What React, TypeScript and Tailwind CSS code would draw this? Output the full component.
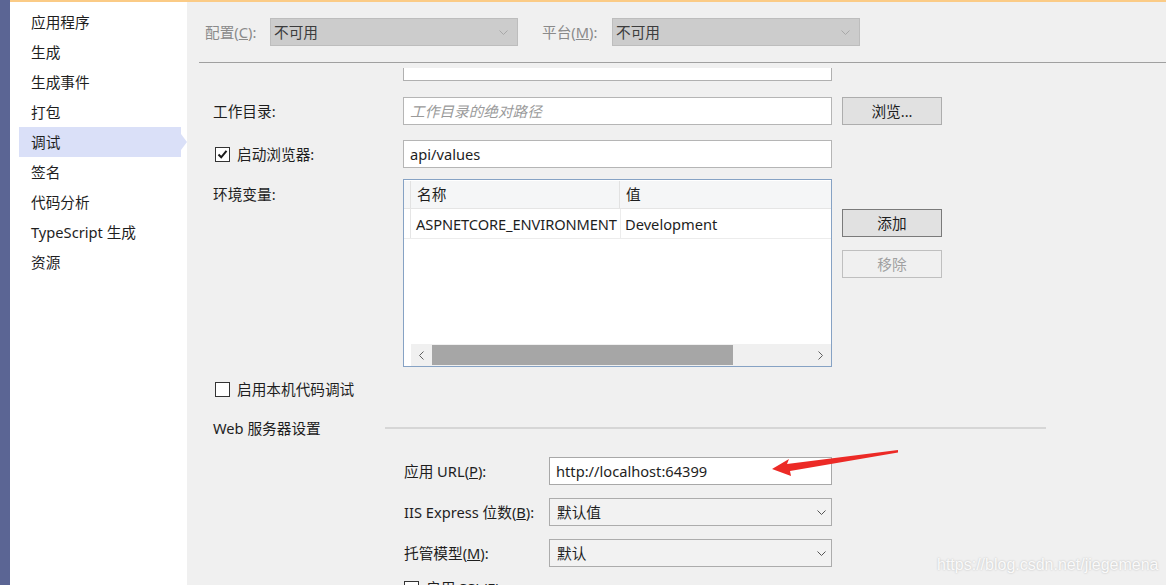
import React from "react";

function Chevron({ color = "#606060" }: { color?: string }) {
  return (
    <svg width="9" height="5" viewBox="0 0 9 5">
      <polyline points="0.5,0.5 4.5,4.5 8.5,0.5" fill="none" stroke={color} strokeWidth="1" />
    </svg>
  );
}

function CheckBox({ checked }: { checked?: boolean }) {
  return (
    <div className="w-[15px] h-[15px] border border-[#333333] bg-white flex items-center justify-center shrink-0">
      {checked && (
        <svg width="11" height="11" viewBox="0 0 11 11">
          <polyline points="1.5,5.5 4.2,8.3 9.5,1.8" fill="none" stroke="#1a1a1a" strokeWidth="2" />
        </svg>
      )}
    </div>
  );
}

const sideItems = ["应用程序", "生成", "生成事件", "打包", "调试", "签名", "代码分析", "TypeScript 生成", "资源"];

function Sidebar() {
  return (
    <div className="w-[177px] shrink-0 bg-white pt-[5px] flex flex-col">
      {sideItems.map((t, i) => (
        <div
          key={t}
          className={
            "relative h-[30px] ml-[9px] w-[162px] pl-[12px] flex items-center " +
            (i === 4 ? "bg-[#dae0f8]" : "")
          }
        >
          {t}
          {i === 4 && (
            <div className="absolute right-[-6px] top-[7px] w-0 h-0 border-l-[6px] border-l-[#dae0f8] border-y-[8px] border-y-transparent" />
          )}
        </div>
      ))}
    </div>
  );
}

function TopSelect() {
  return (
    <div className="w-[248px] h-[28px] bg-[#cccccc] border border-[#bdbdbd] flex items-center pl-[3px] pr-[9px] text-[#3c3c3c]">
      <span className="flex-1">不可用</span>
      <Chevron color="#a8a8a8" />
    </div>
  );
}

function Select({ value }: { value: string }) {
  return (
    <div className="w-[283px] h-[28px] bg-[#f2f2f2] border border-[#acacac] flex items-center pl-[7px] pr-[5px]">
      <span className="flex-1">{value}</span>
      <Chevron color="#555555" />
    </div>
  );
}

function Btn({ children, variant }: { children: React.ReactNode; variant: "normal" | "default" | "disabled" }) {
  const cls =
    variant === "disabled"
      ? "bg-[#f0f0f0] border-[#bfbfbf] text-[#a0a0a0]"
      : variant === "default"
      ? "bg-[#e1e1e1] border-[#7a7a7a]"
      : "bg-[#e1e1e1] border-[#adadad]";
  return (
    <div className={"w-[100px] h-[28px] border flex items-center justify-center " + cls}>{children}</div>
  );
}

function Main() {
  return (
    <div className="flex-1 flex flex-col min-w-0">
      <div className="h-[60px] shrink-0 flex items-center pl-[18px]">
        <span className="text-[#8a8a8a] w-[65px]">
          配置(<span className="underline">C</span>):
        </span>
        <TopSelect />
        <span className="text-[#8a8a8a] ml-[24px] w-[70px]">
          平台(<span className="underline">M</span>):
        </span>
        <TopSelect />
      </div>
      <div className="ml-[12px] h-px bg-[#a0a0a0] shrink-0" />
      <div className="flex flex-col pl-[26px]">
        <div className="ml-[190px] mt-[5px] w-[429px] h-[13px] bg-white border-x border-b border-[#b0b0b0]" />

        <div className="mt-[16px] h-[28px] flex items-center">
          <span className="w-[190px]">工作目录:</span>
          <div className="w-[429px] h-[28px] bg-white border border-[#b5b5b5] flex items-center pl-[6px] italic text-[#9a9a9a]">
            工作目录的绝对路径
          </div>
          <div className="ml-[10px]">
            <Btn variant="normal">浏览...</Btn>
          </div>
        </div>

        <div className="mt-[15px] h-[28px] flex items-center">
          <div className="w-[190px] flex items-center">
            <div className="ml-[2px]">
              <CheckBox checked />
            </div>
            <span className="ml-[7px]">启动浏览器:</span>
          </div>
          <div className="w-[429px] h-[28px] bg-white border border-[#b5b5b5] flex items-center pl-[6px]">
            api/values
          </div>
        </div>

        <div className="mt-[11px] flex items-start">
          <span className="w-[190px] pt-[8px]">环境变量:</span>
          <div className="w-[429px] h-[188px] bg-white border border-[#86a2c4] flex flex-col">
            <div className="h-[28px] mt-px flex bg-[#f5f6f7] border-b border-[#e5e5e5]">
              <div className="w-[7px] border-r border-[#e2e2e2]" />
              <div className="w-[209px] pl-[6px] flex items-center border-r border-[#e2e2e2]">名称</div>
              <div className="flex-1 pl-[6px] flex items-center">值</div>
            </div>
            <div className="h-[30px] flex border-b border-[#ececec]">
              <div className="w-[7px] border-r border-[#e5e5e5]" />
              <div className="w-[210px] pl-[5px] pt-px flex items-center border-r border-[#ececec] tracking-[-0.1px]">ASPNETCORE_ENVIRONMENT</div>
              <div className="flex-1 pl-[4px] pt-px flex items-center">Development</div>
            </div>
            <div className="flex-1" />
            <div className="h-[22px] ml-[7px] flex bg-[#f0f0f0]">
              <div className="w-[21px] flex items-center justify-center">
                <svg width="5" height="9" viewBox="0 0 5 9">
                  <polyline points="4.5,0.5 0.5,4.5 4.5,8.5" fill="none" stroke="#606060" strokeWidth="1" />
                </svg>
              </div>
              <div className="w-[301px] bg-[#a6a6a6] my-px" />
              <div className="flex-1" />
              <div className="w-[21px] flex items-center justify-center">
                <svg width="5" height="9" viewBox="0 0 5 9">
                  <polyline points="0.5,0.5 4.5,4.5 0.5,8.5" fill="none" stroke="#606060" strokeWidth="1" />
                </svg>
              </div>
            </div>
          </div>
          <div className="ml-[10px] pt-[30px] flex flex-col gap-[13px]">
            <Btn variant="default">添加</Btn>
            <Btn variant="disabled">移除</Btn>
          </div>
        </div>

        <div className="mt-[15px] h-[15px] flex items-center">
          <div className="ml-[2px]">
            <CheckBox />
          </div>
          <span className="ml-[7px]">启用本机代码调试</span>
        </div>

        <div className="mt-[21px] h-[20px] flex items-center">
          <span className="w-[172px]">Web 服务器设置</span>
          <div className="w-[661px] h-[2px] bg-[#d6d6d6]" />
        </div>

        <div className="ml-[191px] mt-[19px] h-[28px] flex items-center">
          <span className="w-[145px]">
            应用 URL(<span className="underline">P</span>):
          </span>
          <div className="w-[283px] h-[28px] bg-white border border-[#a8a8a8] flex items-center pl-[6px]">
            http://localhost:64399
          </div>
        </div>

        <div className="ml-[191px] mt-[13px] h-[28px] flex items-center">
          <span className="w-[145px]">
            IIS Express 位数(<span className="underline">B</span>):
          </span>
          <Select value="默认值" />
        </div>

        <div className="ml-[191px] mt-[13px] h-[28px] flex items-center">
          <span className="w-[145px]">
            托管模型(<span className="underline">M</span>):
          </span>
          <Select value="默认" />
        </div>

        <div className="ml-[191px] mt-[14px] h-[15px] flex items-center">
          <CheckBox />
          <span className="ml-[7px]">
            启用 SSL(<span className="underline">E</span>)
          </span>
        </div>
      </div>
    </div>
  );
}

export default function App() {
  return (
    <div className="relative w-[1166px] h-[585px] overflow-hidden flex bg-[#f0f0f0] text-[14.67px] leading-none text-[#1e1e1e] font-['Noto_Sans','Noto_Sans_CJK_SC',sans-serif]">
      <div className="w-[10px] shrink-0 bg-[#5b6594]" />
      <div className="flex-1 flex flex-col min-w-0">
        <div className="h-[2px] bg-[#fbcb86] shrink-0" />
        <div className="flex flex-1 min-h-0">
          <Sidebar />
          <Main />
        </div>
      </div>
      <svg className="absolute left-0 top-0 pointer-events-none" width="1166" height="585">
        <polygon
          points="772,469 789,459 787,464 898,450 898,452.5 790,471 791,476"
          fill="#ec2a26"
        />
      </svg>
      <div className="absolute left-[937px] top-[557px] font-['Liberation_Sans',Arial,sans-serif] text-[16px] leading-none text-white/90 [text-shadow:0_0_2px_rgba(0,0,0,0.25)]">
        https://blog.csdn.net/jiegemena
      </div>
    </div>
  );
}
